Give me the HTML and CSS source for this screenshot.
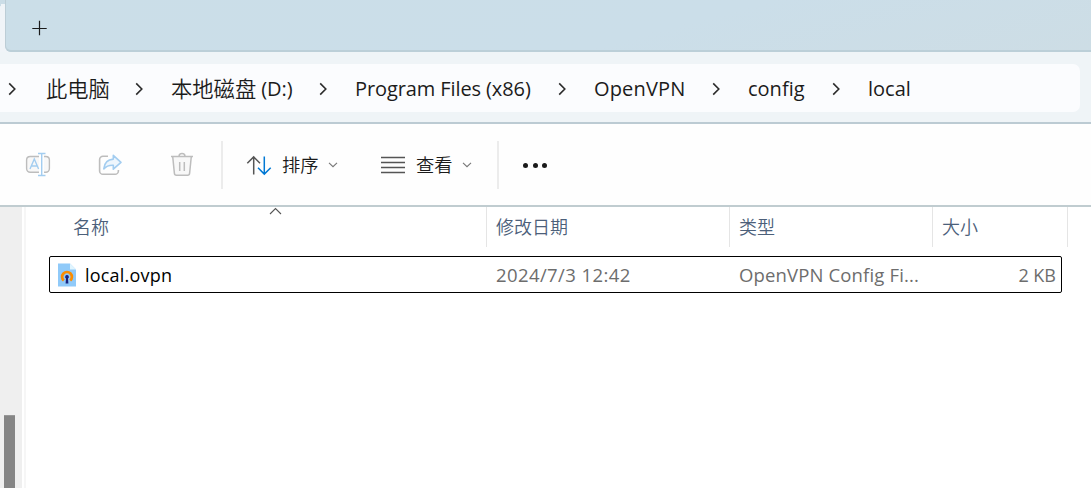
FILE: index.html
```html
<!DOCTYPE html>
<html lang="zh-CN">
<head>
<meta charset="utf-8">
<title>local</title>
<link rel="stylesheet" href="styles.css">
</head>
<body>
<div class="window">
  <header class="tabs">
    <div class="active-tab"></div>
    <div class="tab-rest">
      <svg class="plus" width="16" height="16" viewBox="0 0 16 16"><path d="M7.500 .8v14.400M.3 8.500h14.400"/></svg>
    </div>
  </header>
  <nav class="address">
    <div class="crumbs">
      <div class="crumb"><svg class="chev" width="9" height="14" viewBox="0 0 9 14"><path d="M1.200 1.400 6.800 7 1.200 12.600"/></svg><span class="cjk">此电脑</span></div>
      <div class="crumb"><svg class="chev" width="9" height="14" viewBox="0 0 9 14"><path d="M1.200 1.400 6.800 7 1.200 12.600"/></svg><span class="cjk disk">本地磁盘</span><span class="drive">(D:)</span></div>
      <div class="crumb"><svg class="chev" width="9" height="14" viewBox="0 0 9 14"><path d="M1.200 1.400 6.800 7 1.200 12.600"/></svg><span class="files">Program Files (x86)</span></div>
      <div class="crumb"><svg class="chev" width="9" height="14" viewBox="0 0 9 14"><path d="M1.200 1.400 6.800 7 1.200 12.600"/></svg><span class="vpn">OpenVPN</span></div>
      <div class="crumb"><svg class="chev" width="9" height="14" viewBox="0 0 9 14"><path d="M1.200 1.400 6.800 7 1.200 12.600"/></svg><span class="latin">config</span></div>
      <div class="crumb"><svg class="chev" width="9" height="14" viewBox="0 0 9 14"><path d="M1.200 1.400 6.800 7 1.200 12.600"/></svg><span class="latin">local</span></div>
    </div>
  </nav>
  <div class="toolbar">
    <div class="actions">
      <svg width="26" height="26" viewBox="0 0 26 26" fill="none" stroke-width="1.4">
        <path class="gray" fill="#f8f8f8" d="M14 4.500H5.200A3.600 3.600 0 0 0 1.600 8v8.600a3.600 3.600 0 0 0 3.600 3.600H14M19 4.500h1.800A3.600 3.600 0 0 1 24.400 8v8.600a3.600 3.600 0 0 1-3.600 3.600H19"/>
        <path class="blue" d="M5 17 9.300 7l4.300 10M6.500 14h5.600M16.700 1.500v22M13 1.500h7.500M13 23.500h7.500"/>
      </svg>
      <svg width="26" height="26" viewBox="0 0 26 26" fill="none" stroke-width="1.6" stroke-linejoin="round">
        <path class="gray" d="M11 4.300H6A3.400 3.400 0 0 0 2.600 7.700v11.200A3.400 3.400 0 0 0 6 22.300h12a3.400 3.400 0 0 0 3.400-3.400V18"/>
        <path class="blue" fill="#eef6fd" d="M16.300 3.400 24 10.400l-7.700 6.800v-4c-4-.2-7 .8-9.500 3.700.5-6 4-9.400 9.500-9.800z"/>
      </svg>
      <svg width="26" height="26" viewBox="0 0 26 26" fill="none" stroke-width="1.5" stroke-linejoin="round">
        <path class="gray" fill="#f8f8f8" d="m3.700 4.500 1.700 16.800a2 2 0 0 0 2 1.900h11.200a2 2 0 0 0 2-1.900l1.700-16.800"/>
        <path class="gray" d="M2 4.500h22M10 4.500a3 3 0 0 1 6 0M10.700 10v9M15.300 10v9"/>
      </svg>
    </div>
    <div class="menu sort">
      <svg width="26" height="22" viewBox="0 0 26 22" fill="none" stroke-width="1.5">
        <path stroke="#555" d="M7.700 20.500V3M1.300 9.200 7.700 2.900l6.300 6.300"/>
        <path stroke="#0078d4" d="M18.300 2.500V20M12 13.800l6.300 6.300 6.400-6.300"/>
      </svg>
      <span class="label">排序</span>
      <svg class="down" width="10" height="6" viewBox="0 0 10 6"><path d="M1 .8 5 4.700 9 .8"/></svg>
    </div>
    <div class="menu view">
      <svg width="24" height="18" viewBox="0 0 24 18" stroke="#555" stroke-width="1.300"><path d="M0 1.500h24M0 6.500h24M0 11.500h24M0 16.500h24"/></svg>
      <span class="label">查看</span>
      <svg class="down" width="10" height="6" viewBox="0 0 10 6"><path d="M1 .8 5 4.700 9 .8"/></svg>
    </div>
    <div class="more"><i class="dot"></i><i class="dot"></i><i class="dot"></i></div>
  </div>
  <main class="body">
    <aside class="side"><div class="thumb"></div></aside>
    <section class="list">
      <div class="head">
        <div class="col">名称<svg class="sorted" width="13" height="8" viewBox="0 0 13 8"><path d="M1 7 6.500 1.500 12 7"/></svg></div>
        <div class="col">修改日期</div>
        <div class="col">类型</div>
        <div class="col">大小</div>
      </div>
      <div class="row">
        <div class="name">
          <svg width="18" height="24" viewBox="0 0 18 24">
            <path fill="#90caf9" d="M0 .5h12l6 6V23.500H0z"/><path fill="#e1f5fe" d="M12 .5v6h6z"/>
            <path fill="none" stroke="#fb8c00" stroke-width="2.700" d="M5.800 17.600a4.900 4.900 0 1 1 6.400 0"/>
            <path fill="#1a237e" d="M9 12a1.900 1.900 0 0 1 1 3.500l.4 5H7.600l.4-5A1.900 1.900 0 0 1 9 12z"/>
          </svg>
          <span class="filename">local.ovpn</span>
        </div>
        <div class="date">2024/7/3 12:42</div>
        <div class="type">OpenVPN Config Fi...</div>
        <div class="size">2 KB</div>
      </div>
    </section>
  </main>
</div>
</body>
</html>
```
FILE: styles.css
```css
* { box-sizing: border-box; }
body {
  margin: 0;
  overflow: hidden;
  background: #fff;
  font-family: "Open Sans", "Noto Sans CJK SC", sans-serif;
  color: #1b1b1b;
}
svg { display: block; flex: none; }
.window { width: 1091px; height: 488px; display: flex; flex-direction: column; }

.tabs { height: 52px; display: flex; background: #cbdde7; flex: none; }
.active-tab { width: 5px; background: #f0f4f8; border-top-right-radius: 5px 8px; margin-top: 6px; }
.tab-rest {
  flex: 1;
  border-left: 1px solid #bccdd6;
  border-bottom: 2px solid #bccfd8;
  border-bottom-left-radius: 6px;
  background: linear-gradient(165deg, #cbdee8 0%, #cbdee9 60%, #cddde5 100%);
  box-shadow: -4px 4px 0 #f0f4f8;
  padding: 20px 0 0 26px;
}
.plus { stroke: #1b1b1b; stroke-width: 1.2; }

.address {
  height: 72px;
  flex: none;
  padding: 12px 11px 10px 0;
  background: #eff4f7;
  border-bottom: 2px solid #bccbd3;
}
.crumbs {
  height: 48px;
  padding-left: 8px;
  display: grid;
  grid-template-columns: 127px 184px 239px 154px 120px 1fr;
  align-items: center;
  background: #fbfcfe;
  border-radius: 0 7px 7px 0;
}
.crumb { display: flex; align-items: center; font-size: 20px; line-height: 30px; padding-top: 2px; white-space: nowrap; }
.chev { margin: 0 27px 0 0; fill: none; stroke: #2b2b2b; stroke-width: 1.6; }
.cjk { font-family: "Noto Sans CJK SC", sans-serif; font-size: 21.3px; font-weight: 350; margin-left: 2px; padding-bottom: 3px; }
.disk { margin-left: 0; }
.drive { margin-left: 5px; }
.files { letter-spacing: -0.1px; }
.vpn { letter-spacing: 0.15px; }

.toolbar { height: 83px; flex: none; display: flex; align-items: center; border-bottom: 2px solid #c0ccd0; background: #fefefe; }
.actions {
  width: 223px;
  height: 48px;
  padding-left: 25px;
  display: flex;
  align-items: center;
  gap: 46px;
  border-right: 2px solid #ececec;
}
.gray { stroke: #bdbdbd; }
.blue { stroke: #a3cdf0; }
.menu { display: flex; align-items: center; height: 48px; }
.label { font-size: 18.3px; line-height: 26px; width: 37px; font-weight: 350; }
.down { margin: 1px 0 0 9px; fill: none; stroke: #777; stroke-width: 1.100; }
.sort { width: 158px; padding-left: 23px; }
.sort .label { margin-left: 10px; }
.view { width: 118px; border-right: 2px solid #ececec; }
.view .label { margin-left: 11px; }
.more { display: flex; gap: 4.500px; padding: 2px 0 0 24px; }
.dot { width: 5px; height: 5px; border-radius: 50%; background: #1b1b1b; }

.body { flex: 1; display: flex; }
.side { width: 22px; background: #efefef; padding: 208px 7px 0 4px; }
.thumb { height: 73px; background: #858585; border-top: 1px solid #989898; }
.list { flex: 1; margin-left: 2px; border-left: 2px solid #f6f6f6; }
.head { display: grid; grid-template-columns: 461px 243px 203px 135px; height: 40px; color: #4c607a; }
.col { position: relative; border-right: 1px solid #e5e5e5; padding: 7px 0 0 9px; font-size: 18px; line-height: 26px; font-weight: 350; }
.col:first-child { padding-left: 47px; }
.sorted { position: absolute; left: 243px; top: 0; fill: none; stroke: #555; stroke-width: 1.100; }
.row {
  width: 1013px;
  height: 37px;
  margin: 9px 0 0 23px;
  border: 1px solid #000;
  border-radius: 2px;
  display: grid;
  grid-template-columns: 446px 243px 203px 1fr;
  align-items: center;
  font-size: 18px;
  line-height: 28px;
  color: #6d6d6d;
  white-space: nowrap;
}
.name { display: flex; align-items: center; gap: 9px; padding-left: 8px; color: #000; }
.filename { letter-spacing: 0.2px; }
.date { font-size: 18.5px; letter-spacing: 0.4px; }
.type { font-size: 18.5px; letter-spacing: 0.15px; }
.size { text-align: right; padding-right: 5px; }
```
